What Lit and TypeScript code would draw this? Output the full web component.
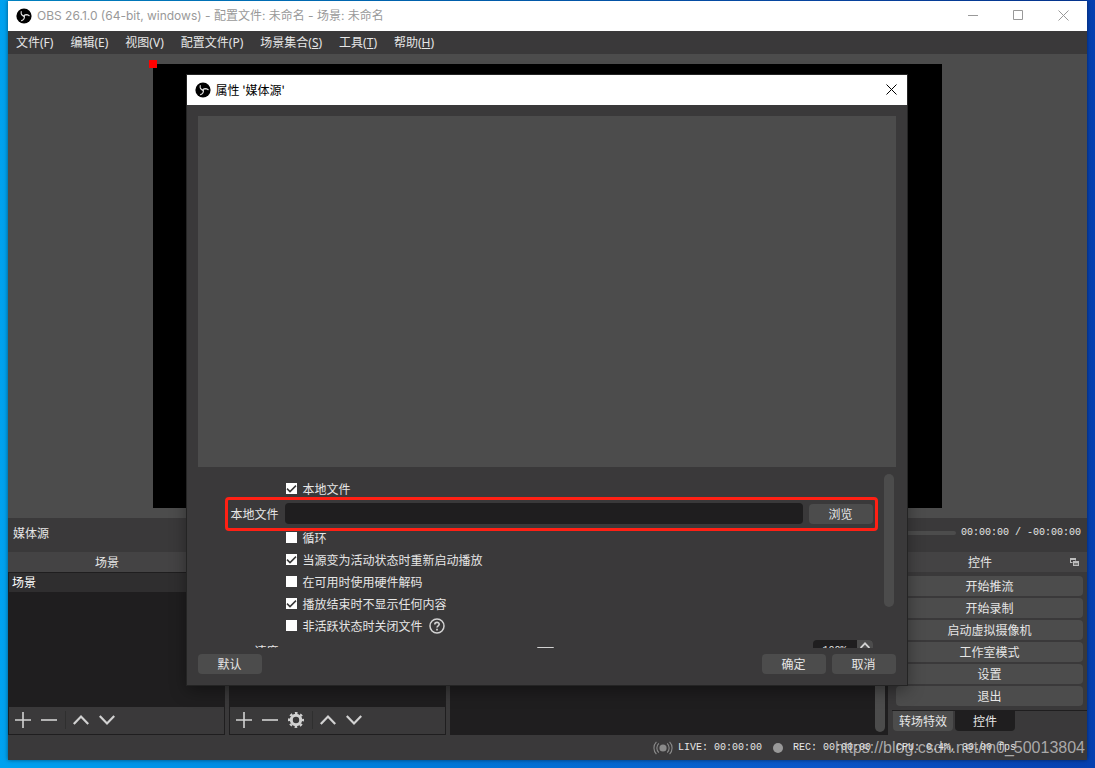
import { LitElement, html, css, svg, nothing } from "lit";
import { customElement, property } from "lit/decorators.js";

const shared = css`
  * {
    box-sizing: border-box;
  }
  button,
  input,
  output {
    font: inherit;
    color: inherit;
    margin: 0;
    padding: 0;
    border: 0;
  }
  .btn {
    height: 20px;
    border-radius: 4px;
    background: #4c4c4c;
    color: #e6e6e6;
    line-height: 20px;
    text-align: center;
  }
  .icon {
    display: block;
    background: none;
    line-height: 0;
  }
  svg {
    display: block;
  }
`;

const blade = "M8 8.4C6.2 7.8 4.8 6.2 5.2 3.6M8 8.4C7.2 8.2 6.4 7.6 6 6.8";
const logo = html`<svg width="16" height="16" viewBox="0 0 16 16" aria-hidden="true">
  <circle cx="8" cy="8" r="7.6" fill="#000" />
  <g fill="none" stroke="#e2e2e2" stroke-width="1.1" stroke-linecap="round">
    <path d=${blade} />
    <path d=${blade} transform="rotate(120 8 8)" />
    <path d=${blade} transform="rotate(240 8 8)" />
  </g>
</svg>`;

const closeGlyph = html`<svg width="11" height="11" viewBox="0 0 11 11" aria-hidden="true">
  <path d="M.5.5l10 10M10.5.5l-10 10" stroke="currentColor" fill="none" />
</svg>`;

const glyphs: Record<string, unknown> = {
  plus: svg`<path d="M8 0v16M0 8h16" />`,
  minus: svg`<path d="M0 8h16" />`,
  up: svg`<path d="M.8 12L8 4.6l7.2 7.4" stroke-width="2.2" />`,
  down: svg`<path d="M.8 4L8 11.4 15.2 4" stroke-width="2.2" />`,
  gear: svg`<circle cx="8" cy="8" r="4.7" stroke-width="3" />
    <circle cx="8" cy="8" r="7" stroke-width="2" stroke-dasharray="2.7 2.8" stroke-dashoffset="1.35" />`,
};

@customElement("tool-bar")
class ToolBar extends LitElement {
  @property({ type: Boolean }) settings = false;
  static styles = [
    shared,
    css`
      :host {
        display: flex;
        align-items: center;
        gap: 10px;
        height: 27px;
        padding: 0 6px 2px;
        box-sizing: border-box;
        background: #3a393a;
        color: #d2d2d2;
      }
      .sep {
        width: 1px;
        height: 18px;
        margin: 0 -3px 0 -2px;
        background: #2f2f2f;
      }
    `,
  ];
  private tool(name: string, label: string) {
    return html`<button class="icon" aria-label=${label}>
      <svg width="16" height="16" viewBox="0 0 16 16" fill="none" stroke="currentColor" stroke-width="1.6">
        ${glyphs[name]}
      </svg>
    </button>`;
  }
  render() {
    return html`${this.tool("plus", "添加")}${this.tool("minus", "移除")}
      ${this.settings ? this.tool("gear", "设置") : nothing}
      <span class="sep"></span>
      ${this.tool("up", "上移")}${this.tool("down", "下移")}`;
  }
}

@customElement("dock-title")
class DockTitle extends LitElement {
  @property() heading = "";
  static styles = [
    shared,
    css`
      :host {
        display: flex;
        align-items: center;
        gap: 2px;
        height: 20px;
        padding-right: 7px;
        background: #444344;
        color: #e6e6e6;
      }
      .text {
        flex: 1;
        text-align: center;
      }
      .float {
        width: 10px;
      }
    `,
  ];
  render() {
    return html`<span class="text">${this.heading}</span>
      <button class="icon float" aria-label="浮动">
        <svg width="9" height="8" viewBox="0 0 9 8">
          <path d="M0 0h6v5H0z" fill="#bdbdbd" />
          <path d="M1 2h4v2H1z" fill="#444344" />
          <path d="M2.5 2.5H9V8H2.5z" fill="#444344" />
          <path d="M3 3h6v5H3z" fill="#bdbdbd" />
          <path d="M4 5h4v2H4z" fill="#777" />
        </svg>
      </button>`;
  }
}

@customElement("properties-dialog")
class PropertiesDialog extends LitElement {
  static styles = [
    shared,
    css`
      :host {
        display: block;
        background: #3a393a;
        color: #e6e6e6;
        box-shadow: 0 0 0 1px #242424, 0 5px 16px rgba(0, 0, 0, 0.4);
      }
      .title {
        display: flex;
        align-items: center;
        gap: 5px;
        height: 30px;
        padding: 0 10px 1px 8px;
        background: #fff;
        color: #000;
      }
      .title .name {
        flex: 1;
      }
      .body {
        display: flex;
        flex-direction: column;
        padding: 11px;
      }
      .video {
        height: 351px;
        background: #4c4c4c;
      }
      .scroll {
        display: flex;
        gap: 11px;
        height: 181px;
        padding: 7px 2px 0 0;
        overflow: hidden;
      }
      .form {
        flex: 1;
        display: flex;
        flex-direction: column;
        gap: 4px;
        padding-top: 6px;
      }
      .row {
        flex: none;
        display: grid;
        grid-template-columns: 81px 1fr;
        column-gap: 6px;
        align-items: center;
        height: 18px;
      }
      .row .name {
        text-align: right;
      }
      .row.file {
        position: relative;
        height: 23px;
        grid-template-columns: 81px 1fr 64px;
      }
      .row.speed {
        height: 24px;
        grid-template-columns: 81px 1fr 60px;
      }
      .row.file::after {
        content: "";
        position: absolute;
        inset: -5px -5px -6px 27px;
        border: 3px solid #ff2014;
        border-radius: 4px;
        z-index: 1;
        pointer-events: none;
      }
      .check {
        grid-column: 2;
        display: flex;
        align-items: center;
        gap: 6px;
      }
      .check label {
        display: flex;
        align-items: center;
        gap: 6px;
      }
      .check input {
        appearance: none;
        width: 11px;
        height: 11px;
        margin: 0 0 1px 1px;
        background: #fff;
      }
      .check input:checked {
        background: #fff
          url("data:image/svg+xml,%3Csvg xmlns='http://www.w3.org/2000/svg' viewBox='0 0 11 11'%3E%3Cpath d='M1 5.6L4 8.6 10 2.6' fill='none' stroke='%23383838' stroke-width='1.5'/%3E%3C/svg%3E");
      }
      .path {
        width: 100%;
        height: 21px;
        border-radius: 4px;
        background: #1f1e1f;
      }
      .slider {
        appearance: none;
        width: 100%;
        height: 10px;
        background: none;
      }
      .slider::-webkit-slider-thumb {
        appearance: none;
        width: 17px;
        height: 8px;
        border-radius: 1px;
        background: #d2d2d2;
      }
      .spin {
        display: flex;
        height: 22px;
        border-radius: 4px;
        overflow: hidden;
        background: #1f1e1f;
      }
      .spin input {
        flex: 1;
        min-width: 0;
        background: none;
        text-align: center;
        font-family: "Liberation Mono", monospace;
        font-size: 10px;
      }
      .spin button {
        width: 16px;
        height: 11px;
        padding: 2px 3px;
        background: #4c4c4c;
      }
      .bar {
        width: 10px;
        height: 133px;
        border-radius: 5px;
        background: #4c4c4c;
      }
      .footer {
        display: flex;
        gap: 6px;
        padding-top: 6px;
      }
      .footer .btn {
        width: 64px;
      }
      .footer .push {
        margin-right: auto;
      }
    `,
  ];
  private check(label: string, on: boolean, help = false) {
    return html`<div class="row">
      <div class="check">
        <label><input type="checkbox" ?checked=${on} />${label}</label>
        ${help
          ? html`<svg width="16" height="16" viewBox="0 0 16 16" fill="none" stroke="#d2d2d2">
              <circle cx="8" cy="8" r="7" stroke-width="1.5" />
              <path d="M5.8 6.4C5.8 3.6 10.3 3.7 10.2 6.3 10.2 7.8 8 7.8 8 9.6" stroke-width="1.6" />
              <path d="M8 10.8v1.6" stroke-width="1.7" />
            </svg>`
          : nothing}
      </div>
    </div>`;
  }
  render() {
    return html`
      <div class="title">
        ${logo}<span class="name">属性 '媒体源'</span>
        <button class="icon" aria-label="关闭">${closeGlyph}</button>
      </div>
      <div class="body">
        <div class="video"></div>
        <div class="scroll">
          <div class="form">
            ${this.check("本地文件", true)}
            <div class="row file">
              <label class="name" for="path">本地文件</label>
              <input class="path" id="path" type="text" readonly />
              <button class="btn">浏览</button>
            </div>
            ${this.check("循环", false)} ${this.check("当源变为活动状态时重新启动播放", true)}
            ${this.check("在可用时使用硬件解码", false)} ${this.check("播放结束时不显示任何内容", true)}
            ${this.check("非活跃状态时关闭文件", false, true)}
            <div class="row speed">
              <label class="name" for="speed">速度</label>
              <input class="slider" id="speed" type="range" min="0" max="200" value="100" />
              <div class="spin">
                <input type="text" value="100%" aria-label="速度" />
                <button class="icon" aria-label="增加">
                  <svg width="10" height="7" viewBox="0 0 10 7">
                    <path d="M.6 6L5 1.4 9.4 6" fill="none" stroke="#d2d2d2" stroke-width="1.8" />
                  </svg>
                </button>
              </div>
            </div>
          </div>
          <div class="bar"></div>
        </div>
        <div class="footer">
          <button class="btn push">默认</button>
          <button class="btn">确定</button>
          <button class="btn">取消</button>
        </div>
      </div>
    `;
  }
}

@customElement("app-root")
class AppRoot extends LitElement {
  static styles = [
    shared,
    css`
      :host {
        display: block;
        height: 100vh;
        padding: 1px 8px 8px;
        box-sizing: border-box;
        overflow: hidden;
        position: relative;
        background: linear-gradient(90deg, #00a2f0, #0078d8 40%, #0a55c8 75%, #0540b0);
        font: 12px/18px "Noto Sans CJK SC", sans-serif;
        color: #e6e6e6;
      }
      .window {
        position: relative;
        display: flex;
        flex-direction: column;
        height: 100%;
        background: #3a393a;
        box-shadow: 0 0 4px rgba(0, 0, 0, 0.5);
      }
      .titlebar {
        display: flex;
        align-items: center;
        gap: 5px;
        height: 30px;
        padding: 0 18px 0 8px;
        background: #fff;
        color: #999;
        font-family: "Inter", "Noto Sans CJK SC", sans-serif;
      }
      .titlebar .name {
        flex: 1;
      }
      .sys {
        display: flex;
        align-items: center;
        gap: 34px;
        padding-bottom: 1px;
      }
      .menu {
        display: flex;
        gap: 17px;
        height: 23px;
        padding: 0 8px;
        line-height: 23px;
        font-family: "Noto Sans", "Noto Sans CJK SC", sans-serif;
      }
      .menu a {
        color: inherit;
        text-decoration: none;
      }
      .preview {
        flex: 1;
        min-height: 0;
        display: flex;
        justify-content: center;
        padding: 10px;
        background: #4c4c4c;
      }
      .canvas {
        position: relative;
        height: 100%;
        aspect-ratio: 16 / 9;
        background: #000;
      }
      .canvas::before {
        content: "";
        position: absolute;
        left: -4px;
        top: -4px;
        width: 8px;
        height: 8px;
        background: #f00;
      }
      .media {
        display: flex;
        align-items: center;
        gap: 5px;
        height: 34px;
        padding: 0 6px 4px 5px;
      }
      .media .seek {
        appearance: none;
        flex: 1;
        height: 4px;
        margin-left: 240px;
        border-radius: 2px;
        background: #4c4c4c;
      }
      .media .seek::-webkit-slider-thumb {
        appearance: none;
        width: 10px;
        height: 10px;
      }
      .mono {
        font-family: "Liberation Mono", monospace;
        font-size: 10px;
        white-space: nowrap;
      }
      .docks {
        display: grid;
        grid-template-columns: 217fr 217fr 438fr 195fr;
        column-gap: 4px;
        height: 183px;
      }
      .dock {
        display: flex;
        flex-direction: column;
        min-width: 0;
      }
      .list {
        flex: 1;
        display: flex;
        flex-direction: column;
        justify-content: space-between;
        padding: 1px;
        background: #1f1e1f;
      }
      .item {
        height: 19px;
        padding-left: 3px;
        background: #2f2e2f;
        color: #fff;
      }
      .list tool-bar {
        margin-top: auto;
      }
      .mixer {
        flex: 1;
        display: flex;
        justify-content: flex-end;
        padding: 3px;
        background: #1f1e1f;
      }
      .mixer .bar {
        width: 10px;
        border-radius: 5px;
        background: #4c4c4c;
      }
      .buttons {
        display: flex;
        flex-direction: column;
        gap: 2px;
        padding: 4px;
      }
      .tabs {
        display: flex;
        gap: 2px;
        padding-left: 1px;
        border-top: 1px solid #1f1e1f;
      }
      .tabs .btn {
        width: 60px;
        border-radius: 0 0 4px 4px;
      }
      .tabs .btn.on {
        background: #1f1e1f;
      }
      .status {
        display: flex;
        align-items: center;
        justify-content: flex-end;
        gap: 11px;
        height: 25px;
        padding: 1px 71px 0 0;
      }
      .status .part {
        display: flex;
        align-items: center;
        gap: 5px;
      }
      .status .rec {
        gap: 10px;
      }
      .status .cpu {
        margin-left: 14px;
      }
      .dialog {
        position: absolute;
        top: 74px;
        left: calc(50% - 361px);
        width: 720px;
      }
      .mark {
        position: absolute;
        right: 10px;
        bottom: 8px;
        font: 16px/24px "Liberation Sans", sans-serif;
        color: rgba(220, 220, 220, 0.7);
      }
    `,
  ];
  render() {
    const menus = [
      ["文件(", "F", false],
      ["编辑(", "E", false],
      ["视图(", "V", false],
      ["配置文件(", "P", false],
      ["场景集合(", "S", true],
      ["工具(", "T", true],
      ["帮助(", "H", true],
    ] as const;
    const controls = ["开始推流", "开始录制", "启动虚拟摄像机", "工作室模式", "设置", "退出"];
    return html`
      <div class="window">
        <header class="titlebar">
          ${logo}
          <span class="name">OBS 26.1.0 (64-bit, windows) - 配置文件: 未命名 - 场景: 未命名</span>
          <div class="sys">
            <button class="icon" aria-label="最小化">
              <svg width="11" height="11"><path d="M0 5.5h10" stroke="#999" /></svg>
            </button>
            <button class="icon" aria-label="最大化">
              <svg width="11" height="11"><path d="M.5.5h9v9h-9z" fill="none" stroke="#999" /></svg>
            </button>
            <button class="icon" aria-label="关闭">${closeGlyph}</button>
          </div>
        </header>
        <nav class="menu">
          ${menus.map(([text, key, line]) => html`<a href="#">${text}${line ? html`<u>${key}</u>` : key})</a>`)}
        </nav>
        <main class="preview"><div class="canvas"></div></main>
        <section class="media">
          <label for="seek">媒体源</label>
          <input class="seek" id="seek" type="range" value="0" />
          <span class="mono">00:00:00 / -00:00:00</span>
        </section>
        <section class="docks">
          <div class="dock">
            <dock-title heading="场景"></dock-title>
            <div class="list">
              <div class="item">场景</div>
              <tool-bar></tool-bar>
            </div>
          </div>
          <div class="dock">
            <dock-title></dock-title>
            <div class="list"><tool-bar settings></tool-bar></div>
          </div>
          <div class="dock">
            <dock-title></dock-title>
            <div class="mixer"><div class="bar"></div></div>
          </div>
          <div class="dock">
            <dock-title heading="控件"></dock-title>
            <div class="buttons">${controls.map((c) => html`<button class="btn">${c}</button>`)}</div>
            <div class="tabs">
              <button class="btn">转场特效</button>
              <button class="btn on">控件</button>
            </div>
          </div>
        </section>
        <footer class="status mono">
          <span class="part">
            <svg width="20" height="14" viewBox="0 0 20 14" fill="none" stroke="#8a8a8a" stroke-width="1.1">
              <circle cx="10" cy="7" r="3.6" fill="#8a8a8a" stroke="none" />
              <path d="M5.8 2.4a6.4 6.4 0 0 0 0 9.2M14.2 2.4a6.4 6.4 0 0 1 0 9.2M3.4.8a9 9 0 0 0 0 12.4M16.6.8a9 9 0 0 1 0 12.4" />
            </svg>
            LIVE: 00:00:00
          </span>
          <span class="part rec">
            <svg width="10" height="10"><circle cx="5" cy="5" r="5" fill="#999" /></svg>
            REC: 00:00:00
          </span>
          <span class="cpu">CPU: 0.4%, 30.00 fps</span>
        </footer>
        <properties-dialog class="dialog" role="dialog" aria-label="属性 '媒体源'"></properties-dialog>
      </div>
      <div class="mark">https://blog.csdn.net/m0_50013804</div>
    `;
  }
}
